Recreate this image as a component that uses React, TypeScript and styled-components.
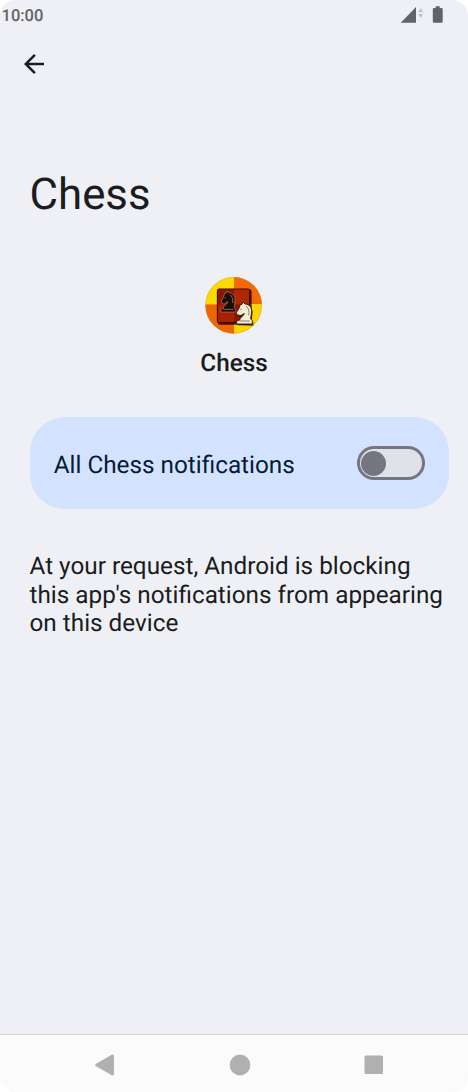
import React from 'react';
import styled, { createGlobalStyle } from 'styled-components';

const GlobalStyle = createGlobalStyle`
  * { box-sizing: border-box; }
  body { margin: 0; background: #fff; }
  h1, h2, p { margin: 0; font-weight: 400; }
  button { border: 0; padding: 0; background: none; }
  svg { display: block; }
`;

const Screen = styled.div`
  width: 468px;
  height: 1092px;
  display: flex;
  flex-direction: column;
  overflow: hidden;
  border-radius: 16px;
  background: #eff0f6;
  color: #1a1c20;
  font-family: Roboto, 'Liberation Sans', sans-serif;
  text-rendering: geometricPrecision;
`;

const StatusBar = styled.header`
  height: 32px;
  flex: none;
  display: flex;
  justify-content: space-between;
  padding: 0 25px 0 1.5px;
`;

const Clock = styled.span`
  font-size: 16.5px;
  font-weight: 500;
  line-height: 34px;
  color: #626366;
`;

const StatusIcons = styled.div`
  display: flex;
  padding-top: 6px;
`;

const AppBar = styled.div`
  height: 64px;
  flex: none;
  display: flex;
  align-items: center;
  padding: 0 0 1px 19px;
`;

const BackButton = styled.button`
  width: 30px;
  height: 30px;
`;

const Content = styled.main`
  flex: 1;
  display: flex;
  flex-direction: column;
  padding: 72px 19.5px 0 29.5px;
`;

const Title = styled.h1`
  height: 52px;
  font-size: 43.8px;
  line-height: 52px;
`;

const AppHeader = styled.section`
  display: flex;
  flex-direction: column;
  align-items: center;
  margin: 57px 10px 0 0;
`;

const AppName = styled.h2`
  margin-top: 15px;
  font-size: 24.3px;
  line-height: 28px;
  font-weight: 500;
`;

const SwitchCard = styled.div`
  height: 92px;
  margin-top: 40px;
  display: flex;
  align-items: center;
  justify-content: space-between;
  padding: 0 24px 0 24.2px;
  border-radius: 35px;
  background: #d3e3ff;
  color: #041c35;
`;

const SwitchLabel = styled.span`
  font-size: 24.3px;
  line-height: 30px;
  padding-top: 3px;
`;

const Track = styled.span`
  width: 68px;
  height: 34px;
  display: flex;
  align-items: center;
  padding-left: 1.5px;
  border: 3px solid #74777f;
  border-radius: 17px;
  background: #e1e2e8;
`;

const Thumb = styled.span`
  width: 25px;
  height: 25px;
  border-radius: 50%;
  background: #74777f;
`;

const Message = styled.p`
  margin-top: 43px;
  font-size: 24.3px;
  line-height: 28.6px;
`;

const NavBar = styled.nav`
  height: 58px;
  flex: none;
  display: flex;
  justify-content: space-between;
  align-items: center;
  padding: 2px 84px 0 94px;
  border-top: 1px solid #d7d8dd;
  background: #fbfbfb;
`;

const AppIcon = () => (
  <svg width="68" height="57" viewBox="0 21 204 171">
    <defs>
      <clipPath id="disc"><circle cx="101" cy="106" r="85" /></clipPath>
      <filter id="soft" x="-20%" y="-20%" width="140%" height="140%"><feGaussianBlur stdDeviation="2.2" /></filter>
    </defs>
    <g clipPath="url(#disc)">
      <rect x="10" y="15" width="92" height="88" fill="#fddb00" />
      <rect x="102" y="15" width="92" height="88" fill="#f26a04" />
      <rect x="10" y="103" width="92" height="96" fill="#ee6503" />
      <rect x="102" y="103" width="92" height="96" fill="#fcd400" />
    </g>
    <circle cx="101" cy="106" r="84" fill="none" stroke="#b98a3c" strokeOpacity=".45" strokeWidth="2" />
    <rect x="53" y="58" width="102" height="106" rx="7" fill="#1c0300" opacity=".8" filter="url(#soft)" />
    <rect x="52" y="57" width="97" height="101" rx="5" fill="#8a1607" stroke="#3b0803" strokeWidth="3" />
    <path d="M102 59h45v44h-45z" fill="#b02706" />
    <path d="M54 103h48v53H54z" fill="#a82005" />
    <path d="M62 126v-8l8-3c0-9 12-12 14-20-5 0-7 6-12 7l-7-3-1-6 7-13 3-10 5-1 2-6 6 5c12 1 18 11 18 22l-2 23 4 5v8z"
      fill="#170d09" stroke="#d6a273" strokeWidth="1.5" strokeLinejoin="round" />
    <path d="M70 118h30M74 84l4-2M90 74c7 6 9 14 8 25" fill="none" stroke="#c99b73" strokeWidth="2" />
    <path d="M111 164v-9l8-3c1-9 12-12 14-19-5 0-8 6-13 6l-8-3-2-6 8-13 4-11 5-1 3-7 6 6c14 1 21 12 20 24l-3 20 5 7v10z"
      fill="#150600" opacity=".7" filter="url(#soft)" transform="translate(2 2)" />
    <path d="M110 162v-9l9-3c1-9 12-12 14-19-5 0-8 6-13 6l-9-3-2-6 8-13 4-11 5-1 3-7 6 6c14 1 21 12 20 24l-3 20 5 6v10z"
      fill="#f6ecd2" stroke="#291409" strokeWidth="2.6" strokeLinejoin="round" />
    <path d="M118 153h31M121 119l4-2M138 108c8 6 11 15 8 28" fill="none" stroke="#66503a" strokeWidth="2.2" />
  </svg>
);

export default function App() {
  return (
    <>
      <GlobalStyle />
      <Screen>
        <StatusBar>
          <Clock>10:00</Clock>
          <StatusIcons>
            <svg width="43" height="18" viewBox="400 6 43 18">
              <path d="M400.7 22.7 416 7v15.7z" fill="#626366" />
              <path d="m420.7 8 2.3 4h-4.6zM420.7 18l-2.3-4h4.6z" fill="#bfc0c4" />
              <path d="M435.7 6.2h4v1.7h1.8q1.2 0 1.2 1.2v12.4q0 1.2-1.2 1.2H434q-1.2 0-1.2-1.2V9.1q0-1.2 1.2-1.2h1.7z" fill="#626366" />
            </svg>
          </StatusIcons>
        </StatusBar>
        <AppBar>
          <BackButton aria-label="Back">
            <svg width="30" height="30" viewBox="0 0 24 24" fill="#1a1c20">
              <path d="M20 11H7.83l5.59-5.59L12 4l-8 8 8 8 1.41-1.41L7.83 13H20z" />
            </svg>
          </BackButton>
        </AppBar>
        <Content>
          <Title>Chess</Title>
          <AppHeader>
            <AppIcon />
            <AppName>Chess</AppName>
          </AppHeader>
          <SwitchCard>
            <SwitchLabel>All Chess notifications</SwitchLabel>
            <Track role="switch" aria-checked="false"><Thumb /></Track>
          </SwitchCard>
          <Message>At your request, Android is blocking this app's notifications from appearing on this device</Message>
        </Content>
        <NavBar>
          <svg width="21" height="22" viewBox="0 0 21 22">
            <path d="M2.8 11 18.5 2v18z" fill="#b0b0b0" stroke="#b0b0b0" strokeWidth="3" strokeLinejoin="round" />
          </svg>
          <svg width="22" height="22" viewBox="0 0 22 22"><circle cx="11" cy="11" r="10.4" fill="#b0b0b0" /></svg>
          <svg width="20" height="20" viewBox="0 0 20 20"><rect x=".5" y=".5" width="18.5" height="18.5" rx="1.5" fill="#b0b0b0" /></svg>
        </NavBar>
      </Screen>
    </>
  );
}
